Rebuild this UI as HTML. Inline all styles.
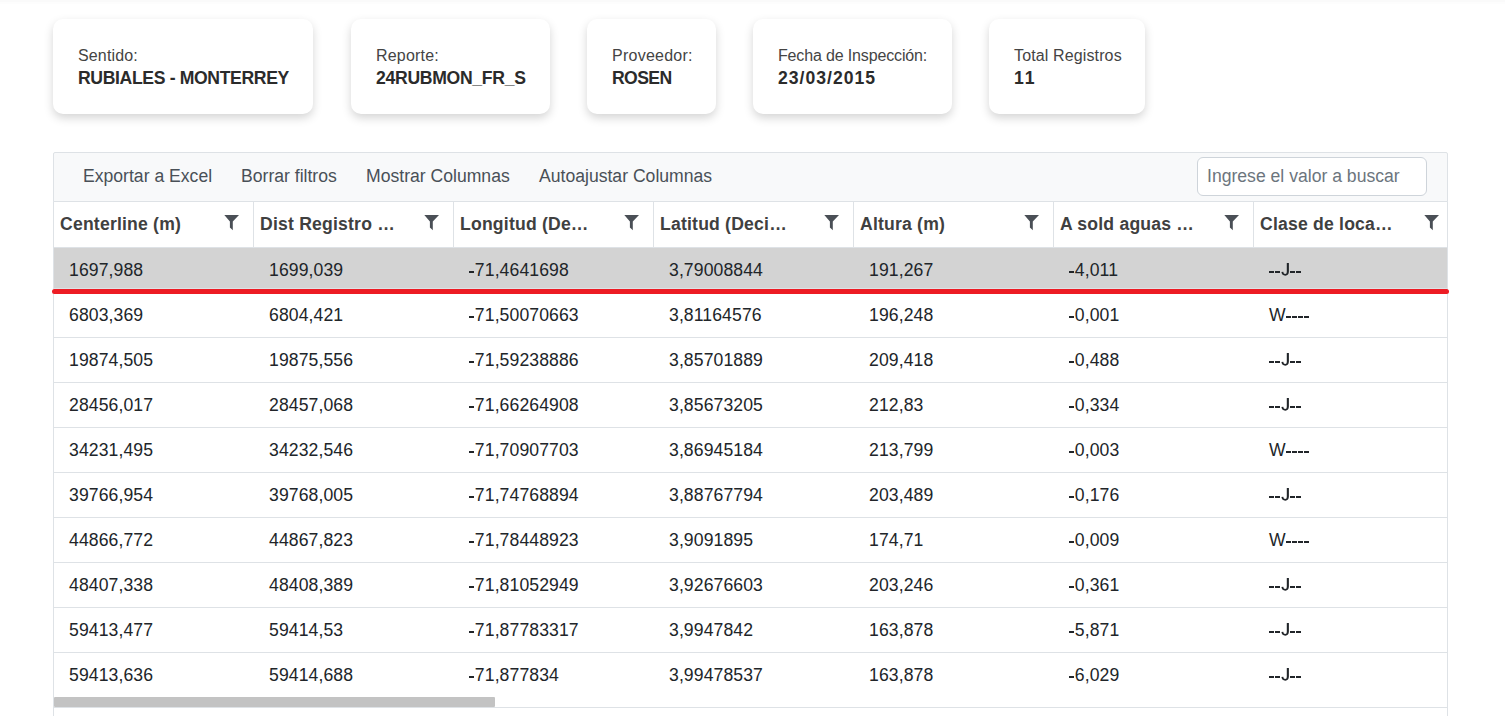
<!DOCTYPE html><html><head><meta charset="utf-8"><style>
*{margin:0;padding:0;box-sizing:border-box}
html,body{width:1505px;height:716px;overflow:hidden;background:#fff}
body{position:relative;font-family:"Liberation Sans",sans-serif}
.topsh{position:absolute;left:0;top:0;width:1505px;height:4px;background:linear-gradient(#fafafa 0,#fafafa 2px,#fdfdfd 2px,#fdfdfd 4px)}
.card{position:absolute;top:19px;height:95px;background:#fff;border-radius:10px;box-shadow:0 4px 10px rgba(0,0,0,.17)}
.card .lb{position:absolute;left:25px;top:29px;font-size:16px;line-height:16px;color:#444;white-space:nowrap;letter-spacing:0.6px}
.card .vl{position:absolute;left:25px;top:50px;font-size:17.6px;line-height:18px;font-weight:bold;color:#2b2b2b;white-space:nowrap}
.grid{position:absolute;left:53px;top:160px;width:1395px;height:556px;border-left:1px solid #dee2e6;border-right:1px solid #dee2e6}
.tb{position:absolute;left:53px;top:152px;width:1395px;height:50px;background:#f8f9fa;border:1px solid #dee2e6;border-top-left-radius:2px;border-top-right-radius:2px}
.tbt{position:absolute;top:166px;font-size:17.6px;line-height:20px;color:#495057;white-space:nowrap}
.inp{position:absolute;left:1197px;top:157px;width:230px;height:39px;border:1px solid #ced4da;border-radius:6px;background:#fff}
.inp span{position:absolute;left:9px;top:8px;font-size:17.6px;line-height:20px;color:#6c757d;white-space:nowrap}
.hd{position:absolute;top:202px;height:46px;left:54px;width:1393px;background:#fff;border-bottom:1px solid #dee2e6}
.hsep{position:absolute;top:202px;height:45px;width:1px;background:#dee2e6}
.ht{position:absolute;top:214px;font-size:17.6px;line-height:20px;font-weight:bold;color:#404040;white-space:nowrap;letter-spacing:0.2px}
.fn{position:absolute;top:215px}
.row{position:absolute;left:54px;width:1393px;background:#fff;border-bottom:1px solid #dee2e6}
.cell{position:absolute;font-size:17.6px;line-height:20px;color:#212529;white-space:nowrap;letter-spacing:0.1px}
.hy{display:inline-block;width:5.86px;height:2px;position:relative;top:-3px;background:linear-gradient(#212529,#212529) no-repeat 0.3px 0/5.3px 2px}
.jj{display:inline-block;vertical-align:baseline}
.red{position:absolute;left:52px;top:289px;width:1397px;height:5px;background:#ed1c24;border-radius:2.5px}
.sb{position:absolute;left:54px;top:697px;width:441px;height:10px;background:#c3c3c3;border-radius:1px}
.sbl{position:absolute;left:54px;top:707px;width:1393px;height:1px;background:#dee2e6}
</style></head><body>
<div class="topsh"></div>
<div class="card" style="left:53px;width:260px"><div class="lb" style="letter-spacing:0.15px">Sentido:</div><div class="vl" style="letter-spacing:-0.35px">RUBIALES - MONTERREY</div></div>
<div class="card" style="left:351px;width:199px"><div class="lb" style="letter-spacing:0.2px">Reporte:</div><div class="vl" style="letter-spacing:-0.3px">24RUBMON_FR_S</div></div>
<div class="card" style="left:587px;width:129px"><div class="lb" style="letter-spacing:0.25px">Proveedor:</div><div class="vl" style="letter-spacing:-0.6px">ROSEN</div></div>
<div class="card" style="left:753px;width:199px"><div class="lb" style="letter-spacing:-0.15px">Fecha de Inspección:</div><div class="vl" style="letter-spacing:1.0px">23/03/2015</div></div>
<div class="card" style="left:989px;width:156px"><div class="lb" style="letter-spacing:0.13px">Total Registros</div><div class="vl" style="letter-spacing:1.9px">11</div></div>
<div class="grid"></div>
<div class="tb"></div>
<div class="tbt" style="left:83px">Exportar a Excel</div>
<div class="tbt" style="left:241px">Borrar filtros</div>
<div class="tbt" style="left:366px">Mostrar Columnas</div>
<div class="tbt" style="left:539px">Autoajustar Columnas</div>
<div class="inp"><span>Ingrese el valor a buscar</span></div>
<div class="hd"></div>
<div class="ht" style="left:60px">Centerline (m)</div>
<svg class="fn" style="left:224px" width="16" height="16" viewBox="0 0 16 16"><path d="M0.3 0 H15 L8.8 6.6 V15.2 L5.9 12.5 V6.6 Z" fill="#4a4f56"/></svg>
<div class="hsep" style="left:253px"></div>
<div class="ht" style="left:260px">Dist Registro …</div>
<svg class="fn" style="left:424px" width="16" height="16" viewBox="0 0 16 16"><path d="M0.3 0 H15 L8.8 6.6 V15.2 L5.9 12.5 V6.6 Z" fill="#4a4f56"/></svg>
<div class="hsep" style="left:453px"></div>
<div class="ht" style="left:460px">Longitud (De…</div>
<svg class="fn" style="left:624px" width="16" height="16" viewBox="0 0 16 16"><path d="M0.3 0 H15 L8.8 6.6 V15.2 L5.9 12.5 V6.6 Z" fill="#4a4f56"/></svg>
<div class="hsep" style="left:653px"></div>
<div class="ht" style="left:660px">Latitud (Deci…</div>
<svg class="fn" style="left:824px" width="16" height="16" viewBox="0 0 16 16"><path d="M0.3 0 H15 L8.8 6.6 V15.2 L5.9 12.5 V6.6 Z" fill="#4a4f56"/></svg>
<div class="hsep" style="left:853px"></div>
<div class="ht" style="left:860px">Altura (m)</div>
<svg class="fn" style="left:1024px" width="16" height="16" viewBox="0 0 16 16"><path d="M0.3 0 H15 L8.8 6.6 V15.2 L5.9 12.5 V6.6 Z" fill="#4a4f56"/></svg>
<div class="hsep" style="left:1053px"></div>
<div class="ht" style="left:1060px">A sold aguas …</div>
<svg class="fn" style="left:1224px" width="16" height="16" viewBox="0 0 16 16"><path d="M0.3 0 H15 L8.8 6.6 V15.2 L5.9 12.5 V6.6 Z" fill="#4a4f56"/></svg>
<div class="hsep" style="left:1253px"></div>
<div class="ht" style="left:1260px">Clase de loca…</div>
<svg class="fn" style="left:1424px" width="16" height="16" viewBox="0 0 16 16"><path d="M0.3 0 H15 L8.8 6.6 V15.2 L5.9 12.5 V6.6 Z" fill="#4a4f56"/></svg>
<div class="row" style="top:248px;height:41px;background:#d3d3d3;"></div>
<div class="cell" style="left:69px;top:260px">1697,988</div>
<div class="cell" style="left:269px;top:260px">1699,039</div>
<div class="cell" style="left:469px;top:260px"><span class="hy"></span>71,4641698</div>
<div class="cell" style="left:669px;top:260px">3,79008844</div>
<div class="cell" style="left:869px;top:260px">191,267</div>
<div class="cell" style="left:1069px;top:260px"><span class="hy"></span>4,011</div>
<div class="cell" style="left:1269px;top:260px"><span class="hy"></span><span class="hy"></span><svg class="jj" width="8.8" height="14" viewBox="0 0 8.8 14"><path d="M5.8,0.9 H7.9 V9.6 C7.9,12.4 6.6,13.7 4.3,13.7 C2.1,13.7 0.7,12.5 0.4,10.1 L2.3,9.8 C2.5,11.3 3.1,12 4.2,12 C5.4,12 5.8,11.2 5.8,9.5 Z" fill="#212529"/></svg><span class="hy"></span><span class="hy"></span></div>
<div class="row" style="top:294px;height:44px;background:#fff;"></div>
<div class="cell" style="left:69px;top:305px">6803,369</div>
<div class="cell" style="left:269px;top:305px">6804,421</div>
<div class="cell" style="left:469px;top:305px"><span class="hy"></span>71,50070663</div>
<div class="cell" style="left:669px;top:305px">3,81164576</div>
<div class="cell" style="left:869px;top:305px">196,248</div>
<div class="cell" style="left:1069px;top:305px"><span class="hy"></span>0,001</div>
<div class="cell" style="left:1269px;top:305px">W<span class="hy"></span><span class="hy"></span><span class="hy"></span><span class="hy"></span></div>
<div class="row" style="top:338px;height:45px;background:#fff;"></div>
<div class="cell" style="left:69px;top:350px">19874,505</div>
<div class="cell" style="left:269px;top:350px">19875,556</div>
<div class="cell" style="left:469px;top:350px"><span class="hy"></span>71,59238886</div>
<div class="cell" style="left:669px;top:350px">3,85701889</div>
<div class="cell" style="left:869px;top:350px">209,418</div>
<div class="cell" style="left:1069px;top:350px"><span class="hy"></span>0,488</div>
<div class="cell" style="left:1269px;top:350px"><span class="hy"></span><span class="hy"></span><svg class="jj" width="8.8" height="14" viewBox="0 0 8.8 14"><path d="M5.8,0.9 H7.9 V9.6 C7.9,12.4 6.6,13.7 4.3,13.7 C2.1,13.7 0.7,12.5 0.4,10.1 L2.3,9.8 C2.5,11.3 3.1,12 4.2,12 C5.4,12 5.8,11.2 5.8,9.5 Z" fill="#212529"/></svg><span class="hy"></span><span class="hy"></span></div>
<div class="row" style="top:383px;height:45px;background:#fff;"></div>
<div class="cell" style="left:69px;top:395px">28456,017</div>
<div class="cell" style="left:269px;top:395px">28457,068</div>
<div class="cell" style="left:469px;top:395px"><span class="hy"></span>71,66264908</div>
<div class="cell" style="left:669px;top:395px">3,85673205</div>
<div class="cell" style="left:869px;top:395px">212,83</div>
<div class="cell" style="left:1069px;top:395px"><span class="hy"></span>0,334</div>
<div class="cell" style="left:1269px;top:395px"><span class="hy"></span><span class="hy"></span><svg class="jj" width="8.8" height="14" viewBox="0 0 8.8 14"><path d="M5.8,0.9 H7.9 V9.6 C7.9,12.4 6.6,13.7 4.3,13.7 C2.1,13.7 0.7,12.5 0.4,10.1 L2.3,9.8 C2.5,11.3 3.1,12 4.2,12 C5.4,12 5.8,11.2 5.8,9.5 Z" fill="#212529"/></svg><span class="hy"></span><span class="hy"></span></div>
<div class="row" style="top:428px;height:45px;background:#fff;"></div>
<div class="cell" style="left:69px;top:440px">34231,495</div>
<div class="cell" style="left:269px;top:440px">34232,546</div>
<div class="cell" style="left:469px;top:440px"><span class="hy"></span>71,70907703</div>
<div class="cell" style="left:669px;top:440px">3,86945184</div>
<div class="cell" style="left:869px;top:440px">213,799</div>
<div class="cell" style="left:1069px;top:440px"><span class="hy"></span>0,003</div>
<div class="cell" style="left:1269px;top:440px">W<span class="hy"></span><span class="hy"></span><span class="hy"></span><span class="hy"></span></div>
<div class="row" style="top:473px;height:45px;background:#fff;"></div>
<div class="cell" style="left:69px;top:485px">39766,954</div>
<div class="cell" style="left:269px;top:485px">39768,005</div>
<div class="cell" style="left:469px;top:485px"><span class="hy"></span>71,74768894</div>
<div class="cell" style="left:669px;top:485px">3,88767794</div>
<div class="cell" style="left:869px;top:485px">203,489</div>
<div class="cell" style="left:1069px;top:485px"><span class="hy"></span>0,176</div>
<div class="cell" style="left:1269px;top:485px"><span class="hy"></span><span class="hy"></span><svg class="jj" width="8.8" height="14" viewBox="0 0 8.8 14"><path d="M5.8,0.9 H7.9 V9.6 C7.9,12.4 6.6,13.7 4.3,13.7 C2.1,13.7 0.7,12.5 0.4,10.1 L2.3,9.8 C2.5,11.3 3.1,12 4.2,12 C5.4,12 5.8,11.2 5.8,9.5 Z" fill="#212529"/></svg><span class="hy"></span><span class="hy"></span></div>
<div class="row" style="top:518px;height:45px;background:#fff;"></div>
<div class="cell" style="left:69px;top:530px">44866,772</div>
<div class="cell" style="left:269px;top:530px">44867,823</div>
<div class="cell" style="left:469px;top:530px"><span class="hy"></span>71,78448923</div>
<div class="cell" style="left:669px;top:530px">3,9091895</div>
<div class="cell" style="left:869px;top:530px">174,71</div>
<div class="cell" style="left:1069px;top:530px"><span class="hy"></span>0,009</div>
<div class="cell" style="left:1269px;top:530px">W<span class="hy"></span><span class="hy"></span><span class="hy"></span><span class="hy"></span></div>
<div class="row" style="top:563px;height:45px;background:#fff;"></div>
<div class="cell" style="left:69px;top:575px">48407,338</div>
<div class="cell" style="left:269px;top:575px">48408,389</div>
<div class="cell" style="left:469px;top:575px"><span class="hy"></span>71,81052949</div>
<div class="cell" style="left:669px;top:575px">3,92676603</div>
<div class="cell" style="left:869px;top:575px">203,246</div>
<div class="cell" style="left:1069px;top:575px"><span class="hy"></span>0,361</div>
<div class="cell" style="left:1269px;top:575px"><span class="hy"></span><span class="hy"></span><svg class="jj" width="8.8" height="14" viewBox="0 0 8.8 14"><path d="M5.8,0.9 H7.9 V9.6 C7.9,12.4 6.6,13.7 4.3,13.7 C2.1,13.7 0.7,12.5 0.4,10.1 L2.3,9.8 C2.5,11.3 3.1,12 4.2,12 C5.4,12 5.8,11.2 5.8,9.5 Z" fill="#212529"/></svg><span class="hy"></span><span class="hy"></span></div>
<div class="row" style="top:608px;height:45px;background:#fff;"></div>
<div class="cell" style="left:69px;top:620px">59413,477</div>
<div class="cell" style="left:269px;top:620px">59414,53</div>
<div class="cell" style="left:469px;top:620px"><span class="hy"></span>71,87783317</div>
<div class="cell" style="left:669px;top:620px">3,9947842</div>
<div class="cell" style="left:869px;top:620px">163,878</div>
<div class="cell" style="left:1069px;top:620px"><span class="hy"></span>5,871</div>
<div class="cell" style="left:1269px;top:620px"><span class="hy"></span><span class="hy"></span><svg class="jj" width="8.8" height="14" viewBox="0 0 8.8 14"><path d="M5.8,0.9 H7.9 V9.6 C7.9,12.4 6.6,13.7 4.3,13.7 C2.1,13.7 0.7,12.5 0.4,10.1 L2.3,9.8 C2.5,11.3 3.1,12 4.2,12 C5.4,12 5.8,11.2 5.8,9.5 Z" fill="#212529"/></svg><span class="hy"></span><span class="hy"></span></div>
<div class="row" style="top:653px;height:45px;background:#fff;border-bottom:none;"></div>
<div class="cell" style="left:69px;top:665px">59413,636</div>
<div class="cell" style="left:269px;top:665px">59414,688</div>
<div class="cell" style="left:469px;top:665px"><span class="hy"></span>71,877834</div>
<div class="cell" style="left:669px;top:665px">3,99478537</div>
<div class="cell" style="left:869px;top:665px">163,878</div>
<div class="cell" style="left:1069px;top:665px"><span class="hy"></span>6,029</div>
<div class="cell" style="left:1269px;top:665px"><span class="hy"></span><span class="hy"></span><svg class="jj" width="8.8" height="14" viewBox="0 0 8.8 14"><path d="M5.8,0.9 H7.9 V9.6 C7.9,12.4 6.6,13.7 4.3,13.7 C2.1,13.7 0.7,12.5 0.4,10.1 L2.3,9.8 C2.5,11.3 3.1,12 4.2,12 C5.4,12 5.8,11.2 5.8,9.5 Z" fill="#212529"/></svg><span class="hy"></span><span class="hy"></span></div>
<div class="red"></div>
<div class="sb"></div><div class="sbl"></div>
</body></html>
